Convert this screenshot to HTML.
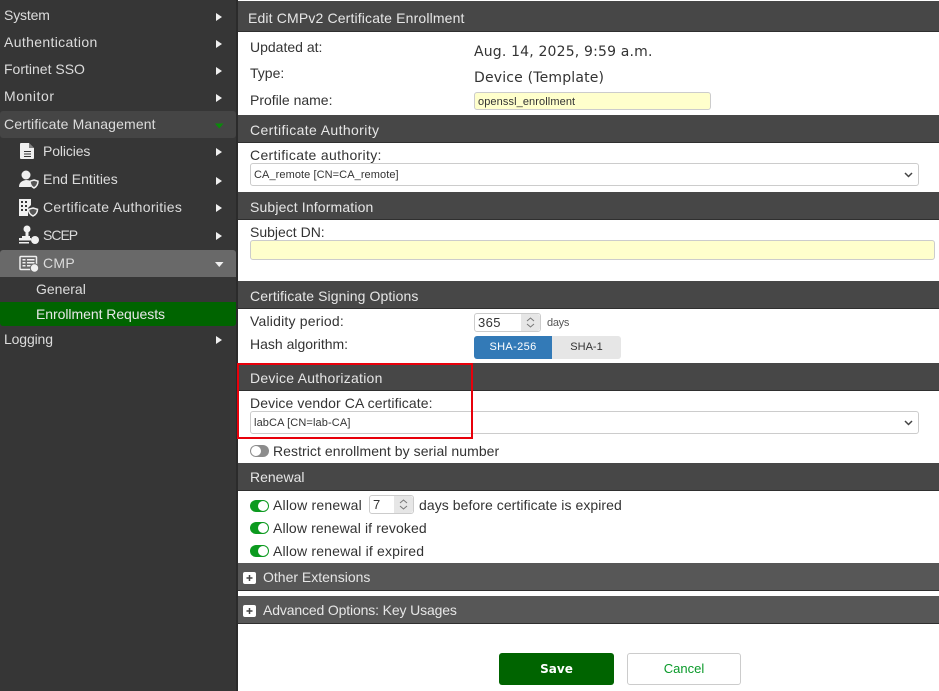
<!DOCTYPE html>
<html><head><meta charset="utf-8">
<style>
html,body{margin:0;padding:0}
body{width:939px;height:691px;overflow:hidden;position:relative;background:#fff;font-family:"Liberation Sans",sans-serif;color:#333}
.a,.t,.h,.n,.arr,.ic{position:absolute}
.t{white-space:nowrap;line-height:18px;font-size:14px;color:#333}
.n{white-space:nowrap;line-height:18px;font-size:14px;color:#dcdcdc;left:4px}
.h{left:238px;width:701px;background:#474747;border-bottom:1px solid #2f2f2f;box-sizing:border-box}
.h span{position:absolute;left:12px;white-space:nowrap;font-size:14px;line-height:18px;color:#e6e6e6}
.box{position:absolute;box-sizing:border-box;border:1px solid #ccc;border-radius:3px;background:#fff}
.s{white-space:nowrap;position:absolute;font-size:11px;line-height:14px;color:#333;left:3px}
.tg{position:absolute;left:250px;width:19px;height:12px;border-radius:6px;background:#0c9a1f}
.tg:after{content:"";position:absolute;right:1px;top:1px;width:10px;height:10px;border-radius:50%;background:#fff}
.tg.off{background:#8c8c8c}
.tg.off:after{right:auto;left:1px}
.spin{position:absolute;right:0;top:0;bottom:0;width:19px;background:#e6e6e6;border-radius:0 3px 3px 0}
</style></head><body>
<div class="a" style="left:0;top:0;width:236px;height:691px;background:#363636"></div>
<div class="a" style="left:236px;top:0;width:2px;height:691px;background:#2b2b2b"></div>
<div class="a" style="left:0;top:111px;width:236px;height:27px;background:#454545;border-radius:3px"></div>
<div class="a" style="left:0;top:250px;width:236px;height:27px;background:#696969;border-radius:3px 3px 0 0"></div>
<div class="a" style="left:0;top:302px;width:236px;height:24px;background:#006400;border-radius:0 0 3px 3px"></div>

<div class="n" style="top:6px;letter-spacing:-.15px">System</div>
<div class="n" style="top:33px;letter-spacing:.35px">Authentication</div>
<div class="n" style="top:60px">Fortinet SSO</div>
<div class="n" style="top:87px;letter-spacing:.55px">Monitor</div>
<div class="n" style="top:115px;letter-spacing:.14px">Certificate Management</div>
<div class="n" style="top:142px;left:43px;letter-spacing:-.12px">Policies</div>
<div class="n" style="top:170px;left:43px">End Entities</div>
<div class="n" style="top:198px;left:43px;letter-spacing:.3px">Certificate Authorities</div>
<div class="n" style="top:226px;left:43px;letter-spacing:-1px">SCEP</div>
<div class="n" style="top:254px;left:43px;letter-spacing:.3px">CMP</div>
<div class="n" style="top:280px;left:36px">General</div>
<div class="n" style="top:305px;left:36px;color:#e8e8e8;letter-spacing:-.05px">Enrollment Requests</div>
<div class="n" style="top:330px;letter-spacing:-.14px">Logging</div>

<svg class="a" style="left:0;top:0" width="236" height="350" fill="#f0f0f0">
<path d="M216 13l6 4-6 4zM216 40l6 4-6 4zM216 67l6 4-6 4zM216 94l6 4-6 4zM216 148l6 4-6 4zM216 177l6 4-6 4zM216 204l6 4-6 4zM216 232l6 4-6 4zM216 336l6 4-6 4z"/>
<path d="M215 123.500h8.500l-4.250 5z" fill="#0a8a0a"/>
<path d="M215 262h8.500l-4.250 5z"/>
<!-- Policies -->
<path d="M21 143h8l5 5v10q0 1-1 1H21q-1 0-1-1v-14q0-1 1-1z"/>
<path d="M24 151h7v1h-7zM24 153.500h7v1h-7zM24 156h7v1h-7z" fill="#363636"/>
<path d="M29 143v5h5z" fill="#363636" opacity=".6"/>
<!-- End entities -->
<circle cx="26" cy="175" r="4.500"/>
<path d="M19 187q0-6 7-7 3 0 4 1l1 6z"/>
<path d="M34 180l4 1.200q0 4.500-4 6.800q-4-2.300-4-6.800z" fill="#555" stroke="#f0f0f0" stroke-width="1.500"/>
<!-- CA -->
<path d="M19 199h12v6l-3 3v8H19z"/>
<path d="M21 201h2v2h-2zM25 201h2v2h-2zM21 205h2v2h-2zM25 205h2v2h-2zM21 209h2v2h-2zM25 209h2v2h-2z" fill="#363636"/>
<path d="M33 208l4.500 1.300q0 4.700-4.500 6.700q-4.500-2-4.500-6.700z" fill="#555" stroke="#f0f0f0" stroke-width="1.500"/>
<!-- SCEP -->
<circle cx="27" cy="229" r="3.500"/>
<path d="M25.500 232h3v5h-3zM22 236h8v2h-8zM19 238h12v2.500H19zM19 242h10v1.500H19z"/>
<circle cx="35" cy="240" r="4"/>
<!-- CMP -->
<rect x="20" y="256.500" width="16.500" height="13" rx="1" fill="#696969" stroke="#f0f0f0" stroke-width="1.500"/>
<path d="M22.500 259h3v1.500h-3zM27 259h7.500v1.500H27zM22.500 262h3v1.500h-3zM27 262h7.500v1.500H27zM22.500 265h3v1.500h-3zM27 265h4v1.500h-4z"/>
<circle cx="34.500" cy="268" r="4.200" stroke="#696969"/>
</svg>

<!-- main -->
<div class="h" style="top:1px;height:31px"><span style="left:10px;top:8px;letter-spacing:.15px">Edit CMPv2 Certificate Enrollment</span></div>
<div class="t" style="left:250px;top:38px">Updated at:</div>
<div class="t" style="left:250px;top:64px">Type:</div>
<div class="t" style="left:250px;top:91px">Profile name:</div>
<div class="t" style="left:474px;top:43px;font-family:'DejaVu Sans',sans-serif;letter-spacing:.17px">Aug. 14, 2025, 9:59 a.m.</div>
<div class="t" style="left:474px;top:69px;font-family:'DejaVu Sans',sans-serif;letter-spacing:.18px">Device (Template)</div>
<div class="box" style="left:474px;top:92px;width:237px;height:18px;background:#ffffcc"><span class="s" style="top:2px;letter-spacing:.1px">openssl_enrollment</span></div>

<div class="h" style="top:115px;height:28px"><span style="top:6px;letter-spacing:.38px">Certificate Authority</span></div>
<div class="t" style="left:250px;top:146px;letter-spacing:.33px">Certificate authority:</div>
<div class="box" style="left:250px;top:163px;width:669px;height:23px"><span class="s" style="top:4px;letter-spacing:.08px">CA_remote [CN=CA_remote]</span>
<svg class="a" style="right:5px;top:8px" width="9" height="6"><path d="M1 1l3.500 3.500L8 1" fill="none" stroke="#444" stroke-width="1.500"/></svg></div>

<div class="h" style="top:192px;height:28px"><span style="top:6px;letter-spacing:.15px">Subject Information</span></div>
<div class="t" style="left:250px;top:223px">Subject DN:</div>
<div class="box" style="left:250px;top:240px;width:685px;height:20px;background:#ffffcc"></div>

<div class="h" style="top:281px;height:28px"><span style="top:6px;letter-spacing:.1px">Certificate Signing Options</span></div>
<div class="t" style="left:250px;top:312px;letter-spacing:.2px">Validity period:</div>
<div class="t" style="left:250px;top:335px">Hash algorithm:</div>
<div class="box" style="left:474px;top:313px;width:67px;height:19px"><span class="s" style="left:3px;top:2px;font-size:13px;letter-spacing:.4px">365</span><div class="spin"><svg width="19" height="17"><path d="M6 7l3.500-3L13 7M6 10l3.500 3L13 10" fill="none" stroke="#777" stroke-width="1"/></svg></div></div>
<div class="t" style="left:547px;top:314px;font-size:11px;color:#555;letter-spacing:-.3px">days</div>
<div class="a" style="left:474px;top:336px;width:78px;height:23px;background:#337ab7;border-radius:3px 0 0 3px;color:#fff;font-size:11px;line-height:23px;text-align:center;letter-spacing:.35px">SHA-256</div>
<div class="a" style="left:552px;top:336px;width:69px;height:23px;background:#e6e6e6;border-radius:0 3px 3px 0;color:#333;font-size:11px;line-height:23px;text-align:center">SHA-1</div>

<div class="h" style="top:363px;height:28px"><span style="top:6px;letter-spacing:.25px">Device Authorization</span></div>
<div class="t" style="left:250px;top:394px;letter-spacing:.1px">Device vendor CA certificate:</div>
<div class="box" style="left:250px;top:411px;width:669px;height:23px"><span class="s" style="top:4px;letter-spacing:.12px">labCA [CN=lab-CA]</span>
<svg class="a" style="right:5px;top:8px" width="9" height="6"><path d="M1 1l3.500 3.500L8 1" fill="none" stroke="#444" stroke-width="1.500"/></svg></div>
<div class="tg off" style="top:445px"></div>
<div class="t" style="left:273px;top:442px;letter-spacing:.06px">Restrict enrollment by serial number</div>
<div class="a" style="left:237px;top:363px;width:236px;height:76px;box-sizing:border-box;border:2px solid #e8000b"></div>

<div class="h" style="top:463px;height:28px"><span style="top:5px">Renewal</span></div>
<div class="tg" style="top:500px"></div>
<div class="t" style="left:273px;top:496px;letter-spacing:.2px">Allow renewal</div>
<div class="box" style="left:369px;top:495px;width:45px;height:19px"><span class="s" style="top:2px;font-size:13px">7</span><div class="spin"><svg width="19" height="17"><path d="M6 7l3.500-3L13 7M6 10l3.500 3L13 10" fill="none" stroke="#777" stroke-width="1"/></svg></div></div>
<div class="t" style="left:419px;top:496px;letter-spacing:.06px">days before certificate is expired</div>
<div class="tg" style="top:522px"></div>
<div class="t" style="left:273px;top:519px;letter-spacing:.12px">Allow renewal if revoked</div>
<div class="tg" style="top:545px"></div>
<div class="t" style="left:273px;top:542px;letter-spacing:.17px">Allow renewal if expired</div>

<div class="h" style="top:563px;height:28px;background:#575757"><span style="left:25px;top:5px">Other Extensions</span></div>
<div class="h" style="top:596px;height:28px;background:#575757"><span style="left:25px;top:5px;letter-spacing:-.14px">Advanced Options: Key Usages</span></div>
<svg class="a" style="left:243px;top:572px" width="13" height="46">
<rect width="13" height="12" rx="2" fill="#fff"/><path d="M3.500 6h6M6.500 3v6" stroke="#444" stroke-width="1.500"/>
<rect y="33" width="13" height="12" rx="2" fill="#fff"/><path d="M3.500 39h6M6.500 36v6" stroke="#444" stroke-width="1.500"/>
</svg>

<div class="a" style="left:499px;top:653px;width:115px;height:32px;background:#006400;border-radius:3px;color:#fff;font:bold 12px/32px 'DejaVu Sans',sans-serif;text-align:center">Save</div>
<div class="box" style="left:627px;top:653px;width:114px;height:32px;color:#0a9a2a;font:13px/30px 'Liberation Sans',sans-serif;text-align:center">Cancel</div>
</body></html>
